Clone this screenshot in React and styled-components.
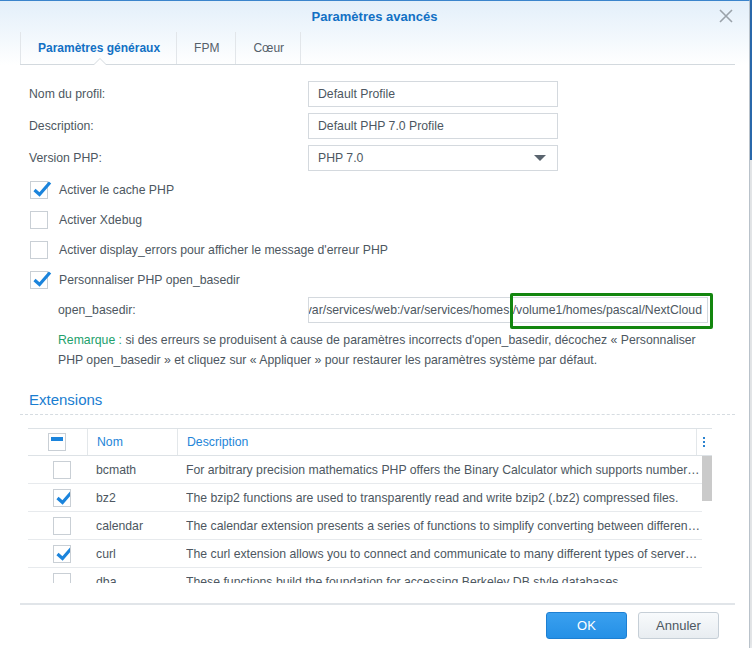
import React from 'react'
import styled, { createGlobalStyle } from 'styled-components'

const GlobalStyle = createGlobalStyle`
  html, body {
    margin: 0;
    padding: 0;
  }
  body {
    width: 752px;
    height: 648px;
    overflow: hidden;
    background: linear-gradient(to bottom, #2c6db3 0, #2c6db3 160px, #eef0f2 160px);
    font-family: "Liberation Sans", Arial, sans-serif;
  }
`

const Dialog = styled.div`
  box-sizing: border-box;
  width: 750px;
  height: 648px;
  display: flex;
  flex-direction: column;
  background: #fff;
  border-top: 1px solid #3a84cc;
  border-right: 1px solid #b9c2ca;
  box-shadow: 2px 0 6px rgba(0, 0, 0, 0.08);
`

const Head = styled.div`
  background: linear-gradient(to bottom, #e3effa 0, #f4f9fd 40px, #fff 64px);
`

const TitleBar = styled.div`
  position: relative;
  height: 31px;
  display: flex;
  align-items: center;
  justify-content: center;
  font-size: 13px;
  font-weight: bold;
  color: #1270c4;
`

const Close = styled.div`
  position: absolute;
  right: 16px;
  top: 8px;
  width: 14px;
  height: 14px;
`

const Tabs = styled.div`
  display: flex;
  height: 32px;
  margin: 0 14px 0 20px;
  border-bottom: 1px solid #d3d9de;
`

const Tab = styled.div`
  position: relative;
  display: flex;
  align-items: center;
  padding: 0 16px 0 17px;
  font-size: 12px;
  font-weight: ${p => (p.active ? 'bold' : 'normal')};
  color: ${p => (p.active ? '#1270c4' : '#55606a')};
  border-right: 1px solid #e2e6ea;
  border-left: ${p => (p.first ? '1px solid #e2e6ea' : 'none')};
`

const Notch = styled.span`
  position: absolute;
  left: 72px;
  bottom: -1px;
  width: 0;
  height: 0;
  border-left: 7px solid transparent;
  border-right: 7px solid transparent;
  border-bottom: 7px solid #d3d9de;

  &::after {
    content: '';
    position: absolute;
    left: -6px;
    top: 1px;
    border-left: 6px solid transparent;
    border-right: 6px solid transparent;
    border-bottom: 6px solid #fff;
  }
`

const Content = styled.div`
  flex: 1;
  display: flex;
  flex-direction: column;
  padding: 0 14px 0 20px;
  font-size: 12.25px;
  color: #4d5761;
`

const Form = styled.div`
  display: flex;
  flex-direction: column;
  padding: 16px 0 0 9px;
`

const FieldRow = styled.div`
  display: flex;
  align-items: center;
  height: 26px;
  margin-bottom: 6px;
`

const Label = styled.div`
  width: 279px;
  padding-left: ${p => p.indent || 0}px;
  box-sizing: border-box;
`

const Input = styled.div`
  box-sizing: border-box;
  width: ${p => p.width || 250}px;
  height: 26px;
  display: flex;
  align-items: center;
  justify-content: ${p => (p.end ? 'flex-end' : 'space-between')};
  padding: 0 ${p => (p.end ? 5 : 9)}px 0 9px;
  border: 1px solid #d4d9de;
  background: #fff;
  color: #4d5761;
  white-space: nowrap;
  overflow: hidden;
`

const Arrow = styled.span`
  width: 0;
  height: 0;
  border-left: 6px solid transparent;
  border-right: 6px solid transparent;
  border-top: 6px solid #5a646e;
  margin-right: 2px;
`

const CheckList = styled.div`
  display: flex;
  flex-direction: column;
  gap: 12px;
  margin-top: 4px;
  padding-left: 1px;
`

const CheckRow = styled.div`
  display: flex;
  align-items: center;
  height: 18px;
  gap: 11px;
`

const Box = styled.span`
  position: relative;
  flex: none;
  display: inline-block;
  box-sizing: border-box;
  width: 18px;
  height: 18px;
  border: 1px solid #c9cfd5;
  background: #fff;
`

const Tick = styled.svg`
  position: absolute;
  left: 1px;
  top: -3px;
`

const Dash = styled.span`
  position: absolute;
  left: 2px;
  top: 3px;
  width: 12px;
  height: 4px;
  background: #1b84dc;
`

const BaseRow = styled.div`
  display: flex;
  align-items: center;
  height: 26px;
  margin-top: 8px;
`

const Highlight = styled.div`
  position: relative;
`

const GreenFrame = styled.div`
  position: absolute;
  left: 202px;
  top: -4px;
  width: 197px;
  height: 30px;
  border: 3px solid #13860f;
  border-radius: 2px;
`

const Note = styled.div`
  margin-top: 7px;
  padding-left: 29px;
  line-height: 20px;
`

const NoteTag = styled.span`
  color: #22a06b;
`

const SectionTitle = styled.div`
  margin-top: 20px;
  padding: 0 0 4px 9px;
  font-size: 15px;
  line-height: 20px;
  color: #1a7dd0;
  border-bottom: 1px dashed #d6dce1;
`

const Table = styled.div`
  margin: 13px 0 0 8px;
  width: 684px;
`

const HeadRow = styled.div`
  display: grid;
  grid-template-columns: 59px 90px 1fr 16px;
  height: 26px;
  border-top: 1px solid #dde2e6;
  border-bottom: 1px solid #dde2e6;
`

const HeadCell = styled.div`
  display: flex;
  align-items: center;
  padding-left: ${p => p.pad ?? 9}px;
  color: #2485d8;
  border-left: ${p => (p.sep ? '1px solid #e3e7ea' : 'none')};
`

const Dots = styled.div`
  display: flex;
  flex-direction: column;
  gap: 2px;
  margin-left: 6px;

  span {
    width: 2px;
    height: 2px;
    background: #2a82cf;
  }
`

const Body = styled.div`
  display: flex;
  height: 127px;
  overflow: hidden;
`

const Rows = styled.div`
  width: 674px;
`

const Row = styled.div`
  display: grid;
  grid-template-columns: 59px 90px 1fr;
  height: 28px;
  border-bottom: 1px solid #e7eaed;
  box-sizing: border-box;
`

const Cell = styled.div`
  display: flex;
  align-items: center;
  padding-left: ${p => p.pad ?? 9}px;
  padding-right: 2px;
  overflow: hidden;
  white-space: nowrap;

  span {
    overflow: hidden;
    text-overflow: ellipsis;
  }
`

const Scroll = styled.div`
  width: 10px;

  &::before {
    content: '';
    display: block;
    height: 45px;
    background: #cacaca;
  }
`

const Footer = styled.div`
  margin-top: auto;
  border-top: 2px solid #e1e5e9;
  height: 43px;
  display: flex;
  align-items: center;
  justify-content: flex-end;
  gap: 11px;
  padding-right: 16px;
`

const Button = styled.button`
  box-sizing: border-box;
  width: 81px;
  height: 27px;
  font-family: "Liberation Sans", Arial, sans-serif;
  font-size: 13px;
  border-radius: 3px;
  border: 1px solid ${p => (p.primary ? '#1d7fd2' : '#c6cfd7')};
  background: ${p =>
    p.primary
      ? 'linear-gradient(to bottom, #3aa0ef, #2590e6)'
      : 'linear-gradient(to bottom, #f8fafc, #e8edf1)'};
  color: ${p => (p.primary ? '#fff' : '#4d5761')};
  margin-bottom: 2px;
`

const Check = ({ on }) => (
  <Box>
    {on && (
      <Tick width="20" height="20" viewBox="0 0 20 20">
        <path d="M2.5 11 L7.5 15.5 L18 3.5" fill="none" stroke="#1b84dc" strokeWidth="3.2" strokeLinejoin="miter" />
      </Tick>
    )}
  </Box>
)

const options = [
  { label: 'Activer le cache PHP', on: true },
  { label: 'Activer Xdebug', on: false },
  { label: "Activer display_errors pour afficher le message d'erreur PHP", on: false },
  { label: 'Personnaliser PHP open_basedir', on: true },
]

const extensions = [
  { name: 'bcmath', on: false, desc: 'For arbitrary precision mathematics PHP offers the Binary Calculator which supports numbers of any size and precision' },
  { name: 'bz2', on: true, desc: 'The bzip2 functions are used to transparently read and write bzip2 (.bz2) compressed files.' },
  { name: 'calendar', on: false, desc: 'The calendar extension presents a series of functions to simplify converting between different calendar formats' },
  { name: 'curl', on: true, desc: 'The curl extension allows you to connect and communicate to many different types of servers with many different types of protocols' },
  { name: 'dba', on: false, desc: 'These functions build the foundation for accessing Berkeley DB style databases.' },
]

const App = () => {
  return (
    <>
      <GlobalStyle />
      <Dialog>
        <Head>
          <TitleBar>
            Paramètres avancés
            <Close>
              <svg width="14" height="14" viewBox="0 0 14 14">
                <path d="M1 1 L13 13 M13 1 L1 13" stroke="#9aa2a9" strokeWidth="1.6" />
              </svg>
            </Close>
          </TitleBar>
          <Tabs>
            <Tab active first>
              Paramètres généraux
              <Notch />
            </Tab>
            <Tab>FPM</Tab>
            <Tab>Cœur</Tab>
          </Tabs>
        </Head>

        <Content>
          <Form>
            <FieldRow>
              <Label>Nom du profil:</Label>
              <Input>Default Profile</Input>
            </FieldRow>
            <FieldRow>
              <Label>Description:</Label>
              <Input>Default PHP 7.0 Profile</Input>
            </FieldRow>
            <FieldRow>
              <Label>Version PHP:</Label>
              <Input>
                PHP 7.0
                <Arrow />
              </Input>
            </FieldRow>

            <CheckList>
              {options.map(o => (
                <CheckRow key={o.label}>
                  <Check on={o.on} />
                  {o.label}
                </CheckRow>
              ))}
            </CheckList>

            <BaseRow>
              <Label indent={29}>open_basedir:</Label>
              <Highlight>
                <Input width={400} end>
                  /var/services/web:/var/services/homes:/volume1/homes/pascal/NextCloud
                </Input>
                <GreenFrame />
              </Highlight>
            </BaseRow>

            <Note>
              <NoteTag>Remarque :</NoteTag> si des erreurs se produisent à cause de paramètres incorrects d'open_basedir, décochez « Personnaliser
              <br />
              PHP open_basedir » et cliquez sur « Appliquer » pour restaurer les paramètres système par défaut.
            </Note>
          </Form>

          <SectionTitle>Extensions</SectionTitle>

          <Table>
            <HeadRow>
              <HeadCell pad={20}>
                <Box>
                  <Dash />
                </Box>
              </HeadCell>
              <HeadCell sep>Nom</HeadCell>
              <HeadCell sep>Description</HeadCell>
              <HeadCell sep pad={0}>
                <Dots>
                  <span />
                  <span />
                  <span />
                </Dots>
              </HeadCell>
            </HeadRow>
            <Body>
              <Rows>
                {extensions.map(x => (
                  <Row key={x.name}>
                    <Cell pad={25}>
                      <Check on={x.on} />
                    </Cell>
                    <Cell>{x.name}</Cell>
                    <Cell>
                      <span>{x.desc}</span>
                    </Cell>
                  </Row>
                ))}
              </Rows>
              <Scroll />
            </Body>
          </Table>

          <Footer>
            <Button primary>OK</Button>
            <Button>Annuler</Button>
          </Footer>
        </Content>
      </Dialog>
    </>
  )
}

export default App
